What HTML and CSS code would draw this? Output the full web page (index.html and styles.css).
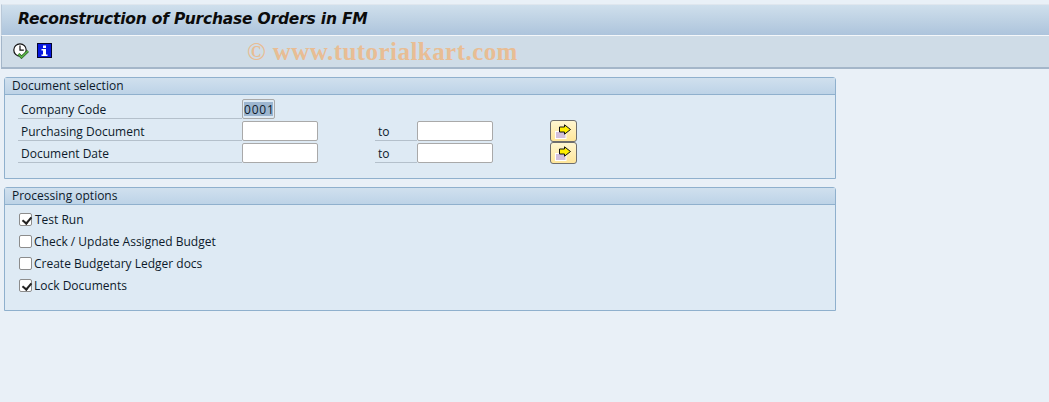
FILE: index.html
```html
<!DOCTYPE html>
<html lang="en">
<head>
  <meta charset="UTF-8" />
  <title>Reconstruction of Purchase Orders in FM</title>
  <link rel="stylesheet" href="styles.css">
</head>
<body>

  <header class="title-bar">
    <h1>Reconstruction of Purchase Orders in FM</h1>
  </header>

  <div class="toolbar">
    <!-- Execute -->
    <svg class="tool-icon" viewBox="0 0 16 16">
      <circle cx="7" cy="7" r="6.2" fill="#fff" stroke="#111" stroke-width="1.2"/>
      <path d="M7 2.5v4.7h3.8" fill="none" stroke="#111" stroke-width="1.2"/>
      <path d="M5.5 11l3 3.2L15 8" fill="none" stroke="#2f5f2a" stroke-width="2.8"/>
      <path d="M5.5 11l3 3.2L15 8" fill="none" stroke="#5cb848" stroke-width="1.4"/>
    </svg>
    <!-- Info -->
    <svg class="info-icon" viewBox="0 0 15 15">
      <rect x="0.5" y="0.5" width="14" height="14" fill="#0618e0" stroke="#05052e"/>
      <rect x="6" y="2.5" width="3" height="2.5" fill="#fff"/>
      <path d="M4.5 6h4.5v5.5h1.5v1.5h-6v-1.5H6V7.5H4.5z" fill="#fff"/>
    </svg>
    <span class="watermark">© www.tutorialkart.com</span>
  </div>

  <section class="panel selection">
    <h2>Document selection</h2>
    <div class="rows">
      <div class="row">
        <label>Company Code</label>
        <span class="field field-small"><span class="selected">0001</span></span>
      </div>
      <div class="row">
        <label>Purchasing Document</label>
        <span class="field"></span>
        <span class="to">to</span>
        <span class="field"></span>
        <button class="more">
          <svg viewBox="0 0 17 15"><rect x="0.5" y="7.5" width="10.5" height="7" fill="#d3c0dc" stroke="#fff"/><path d="M4.5 3h5V.8l6 4.7-6 4.7V8h-5z" fill="#ffee00" stroke="#111"/></svg>
        </button>
      </div>
      <div class="row">
        <label>Document Date</label>
        <span class="field"></span>
        <span class="to">to</span>
        <span class="field"></span>
        <button class="more">
          <svg viewBox="0 0 17 15"><rect x="0.5" y="7.5" width="10.5" height="7" fill="#d3c0dc" stroke="#fff"/><path d="M4.5 3h5V.8l6 4.7-6 4.7V8h-5z" fill="#ffee00" stroke="#111"/></svg>
        </button>
      </div>
    </div>
  </section>

  <section class="panel options">
    <h2>Processing options</h2>
    <div class="checks">
      <div class="check-row first"><span class="box checked"></span>Test Run</div>
      <div class="check-row"><span class="box"></span>Check / Update Assigned Budget</div>
      <div class="check-row"><span class="box"></span>Create Budgetary Ledger docs</div>
      <div class="check-row"><span class="box checked"></span>Lock Documents</div>
    </div>
  </section>

</body>
</html>
```

FILE: styles.css
```css
:root {
  --page: #e9f0f7;
  --panel: #deeaf4;
  --panel-line: #8fb0cd;
  --text: #0d1a2b;
}
* { box-sizing: border-box; }
html, body { height: 100%; }
body {
  margin: 0;
  padding-top: 4px;
  background: var(--page);
  color: var(--text);
  font-family: "Open Sans", "Noto Sans", sans-serif;
  font-size: 12px;
  overflow: hidden;
}

/* Title */
.title-bar {
  height: 32px;
  margin-left: 1px;
  padding: 0 0 3px 16px;
  display: flex;
  align-items: center;
  background: linear-gradient(#cfdfec, #adc4dc);
  border-top: 1px solid #dfe6ee;
  border-bottom: 1px solid #f4f7fa;
  border-left: 1px solid #b9c8d8;
}
.title-bar h1 {
  margin: 0;
  font-family: "DejaVu Sans", sans-serif;
  font-size: 15.5px;
  font-style: italic;
  font-weight: 700;
  letter-spacing: -0.2px;
  color: #0b0b0b;
  white-space: nowrap;
}

/* Toolbar */
.toolbar {
  height: 33px;
  margin-left: 1px;
  padding: 7px 0 0 11px;
  display: flex;
  align-items: flex-start;
  gap: 8px;
  background: #cfdce7;
  border-bottom: 2px solid #a4b6c9;
  border-left: 1px solid #a4b6c9;
}
.tool-icon {
  width: 16px;
  height: 16px;
  flex: none;
}
.info-icon {
  width: 15px;
  height: 15px;
  flex: none;
}
.watermark {
  margin: -5px 0 0 187px;
  font-family: "Liberation Serif", serif;
  font-size: 25px;
  font-weight: 700;
  letter-spacing: 0.45px;
  color: #e8bd94;
  white-space: nowrap;
}

/* Group boxes */
.panel {
  width: 832px;
  margin-left: 4px;
  background: var(--panel);
  border: 1px solid var(--panel-line);
  border-radius: 3px 3px 0 0;
}
.panel h2 {
  margin: 0;
  height: 17px;
  padding-left: 7px;
  font-size: 12px;
  font-weight: 400;
  line-height: 15px;
  background: linear-gradient(#d0e0ee, #bdd3e7);
  border-bottom: 1px solid var(--panel-line);
}
.selection {
  height: 102px;
  margin-top: 8px;
}
.options {
  height: 124px;
  margin-top: 8px;
}

/* Selection rows */
.rows {
  padding: 4px 0 0 13px;
  display: flex;
  flex-direction: column;
  gap: 2px;
}
.row {
  height: 20px;
  display: flex;
  align-items: stretch;
}
.row label {
  width: 224px;
  padding-left: 3px;
  line-height: 21px;
  border-bottom: 1px solid #b4c0cb;
}
.row .to {
  width: 42px;
  margin-left: 57px;
  padding-left: 3px;
  line-height: 21px;
  border-bottom: 1px solid #b4c0cb;
}
.field {
  width: 76px;
  height: 20px;
  background: #fff;
  border: 1px solid #a9a9a9;
  border-radius: 2px;
}
.field-small {
  width: 33px;
  padding: 2px 1px;
  background: var(--panel);
}
.selected {
  display: block;
  height: 14px;
  line-height: 15px;
  text-align: center;
  letter-spacing: 0.8px;
  background: #9db6d0;
}
.more {
  width: 27px;
  height: 22px;
  margin: -1px 0 0 57px;
  padding: 0;
  display: flex;
  align-items: center;
  justify-content: center;
  background: linear-gradient(#fff6d0, #ffe699);
  border: 1px solid #6e6e6e;
  border-radius: 3px;
}
.more svg {
  width: 17px;
  height: 15px;
}

/* Checkboxes */
.checks {
  padding: 7px 0 0 14px;
  display: flex;
  flex-direction: column;
  gap: 6px;
}
.check-row {
  height: 16px;
  display: flex;
  align-items: center;
  gap: 2px;
  line-height: 16px;
}
.check-row.first { gap: 3px; }
.box {
  position: relative;
  width: 13px;
  height: 13px;
  margin-top: -1px;
  background: #fff;
  border: 1px solid #8c8c8c;
  border-radius: 2px;
}
.box.checked::after {
  content: "";
  position: absolute;
  left: 3.5px;
  top: 1px;
  width: 4px;
  height: 7px;
  border: solid #222;
  border-width: 0 2px 2px 0;
  transform: rotate(40deg);
}
```
